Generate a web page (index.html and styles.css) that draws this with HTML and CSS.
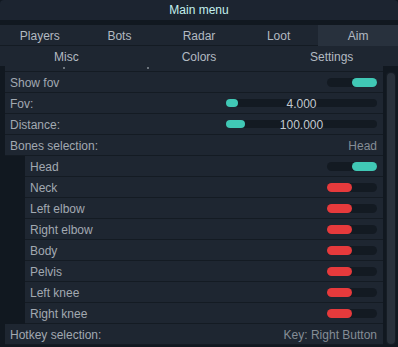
FILE: index.html
```html
<!DOCTYPE html>
<html>
<head>
<meta charset="utf-8">
<link rel="stylesheet" href="styles.css">
</head>
<body>
<div class="window">
  <div class="titlebar">Main menu</div>
  <div class="tabs tabs5">
    <div class="tab">Players</div>
    <div class="tab">Bots</div>
    <div class="tab">Radar</div>
    <div class="tab">Loot</div>
    <div class="tab active">Aim</div>
  </div>
  <div class="tabs tabs3">
    <div class="tab">Misc</div>
    <div class="tab">Colors</div>
    <div class="tab">Settings</div>
  </div>
  <div class="content">
    <div class="list">
      <div class="row clipped"><span class="dot"></span><span class="dot second"></span></div>
      <div class="row"><span class="label">Show fov</span><span class="toggle on"><span class="knob"></span></span></div>
      <div class="row"><span class="label">Fov:</span><span class="slider"><span class="sknob" style="width:12px"></span><span class="sval">4.000</span></span></div>
      <div class="row"><span class="label">Distance:</span><span class="slider"><span class="sknob" style="width:19px"></span><span class="sval">100.000</span></span></div>
      <div class="row"><span class="label">Bones selection:</span><span class="value">Head</span></div>
      <div class="row sub"><span class="label">Head</span><span class="toggle on"><span class="knob"></span></span></div>
      <div class="row sub"><span class="label">Neck</span><span class="toggle off"><span class="knob"></span></span></div>
      <div class="row sub"><span class="label">Left elbow</span><span class="toggle off"><span class="knob"></span></span></div>
      <div class="row sub"><span class="label">Right elbow</span><span class="toggle off"><span class="knob"></span></span></div>
      <div class="row sub"><span class="label">Body</span><span class="toggle off"><span class="knob"></span></span></div>
      <div class="row sub"><span class="label">Pelvis</span><span class="toggle off"><span class="knob"></span></span></div>
      <div class="row sub"><span class="label">Left knee</span><span class="toggle off"><span class="knob"></span></span></div>
      <div class="row sub"><span class="label">Right knee</span><span class="toggle off"><span class="knob"></span></span></div>
      <div class="row"><span class="label">Hotkey selection:</span><span class="value">Key: Right Button</span></div>
    </div>
    <div class="scrolltrack"><div class="thumb"></div></div>
  </div>
</div>
</body>
</html>
```

FILE: styles.css
```css
html, body {
  margin: 0;
  padding: 0;
}
body {
  width: 398px;
  height: 347px;
  overflow: hidden;
  background: #111820;
  font-family: "Liberation Sans", Arial, sans-serif;
  font-size: 12px;
}
.window {
  display: flex;
  flex-direction: column;
  height: 347px;
}
.titlebar {
  height: 20px;
  line-height: 21px;
  background: #1c2430;
  color: #c4f0ee;
  text-align: center;
  border-radius: 4px 4px 0 0;
  margin-bottom: 5px;
}
.tabs {
  display: grid;
  height: 20px;
  background: #1e2631;
}
.tabs5 {
  grid-template-columns: repeat(5, 1fr);
  border-bottom: 1px solid #141b23;
}
.tabs3 {
  grid-template-columns: repeat(3, 1fr);
}
.tab {
  line-height: 22px;
  text-align: center;
  color: #b3bac2;
}
.tab.active {
  background: #28313d;
}
.content {
  flex: 1;
  display: flex;
  min-height: 0;
  padding-left: 5px;
  gap: 3px;
}
.list {
  flex: 1;
  overflow: hidden;
  display: flex;
  flex-direction: column;
}
.row {
  flex: none;
  height: 20px;
  border-bottom: 1px solid #141b23;
  background: #1e2631;
  display: flex;
  align-items: center;
  justify-content: space-between;
  padding: 0 6px 0 5px;
  color: #a2a9b1;
}
.row.clipped {
  height: 5px;
  justify-content: flex-start;
  align-items: flex-start;
  padding-left: 58px;
}
.dot {
  width: 2px;
  height: 2px;
  margin-top: 1px;
  background: #6c747c;
}
.dot.second {
  margin-left: 82px;
}
.row.sub {
  margin-left: 20px;
}
.label {
  white-space: nowrap;
  padding-top: 2px;
}
.value {
  color: #858d96;
  white-space: nowrap;
  padding-top: 2px;
}
.toggle {
  width: 50px;
  height: 9px;
  border-radius: 5px;
  background: #131a22;
  display: flex;
}
.toggle .knob {
  width: 25px;
  height: 9px;
  border-radius: 5px;
}
.toggle.on {
  justify-content: flex-end;
}
.toggle.on .knob {
  background: #40c8b5;
}
.toggle.off .knob {
  background: #e63a3c;
}
.slider {
  width: 151px;
  height: 8px;
  border-radius: 4px;
  background: #131a22;
  position: relative;
  display: flex;
}
.sknob {
  height: 8px;
  border-radius: 4px;
  background: #40c8b5;
}
.sval {
  position: absolute;
  left: 0;
  right: 0;
  top: -2px;
  line-height: 14px;
  text-align: center;
  color: #c2c9d0;
}
.scrolltrack {
  width: 10px;
  margin: 6px 2px 2px 0;
  background: #161d25;
  border-radius: 4px;
  display: flex;
  flex-direction: column;
  padding: 1px;
  box-sizing: border-box;
}
.thumb {
  flex: 1;
  background: #29313b;
  border-radius: 4px;
}
```
